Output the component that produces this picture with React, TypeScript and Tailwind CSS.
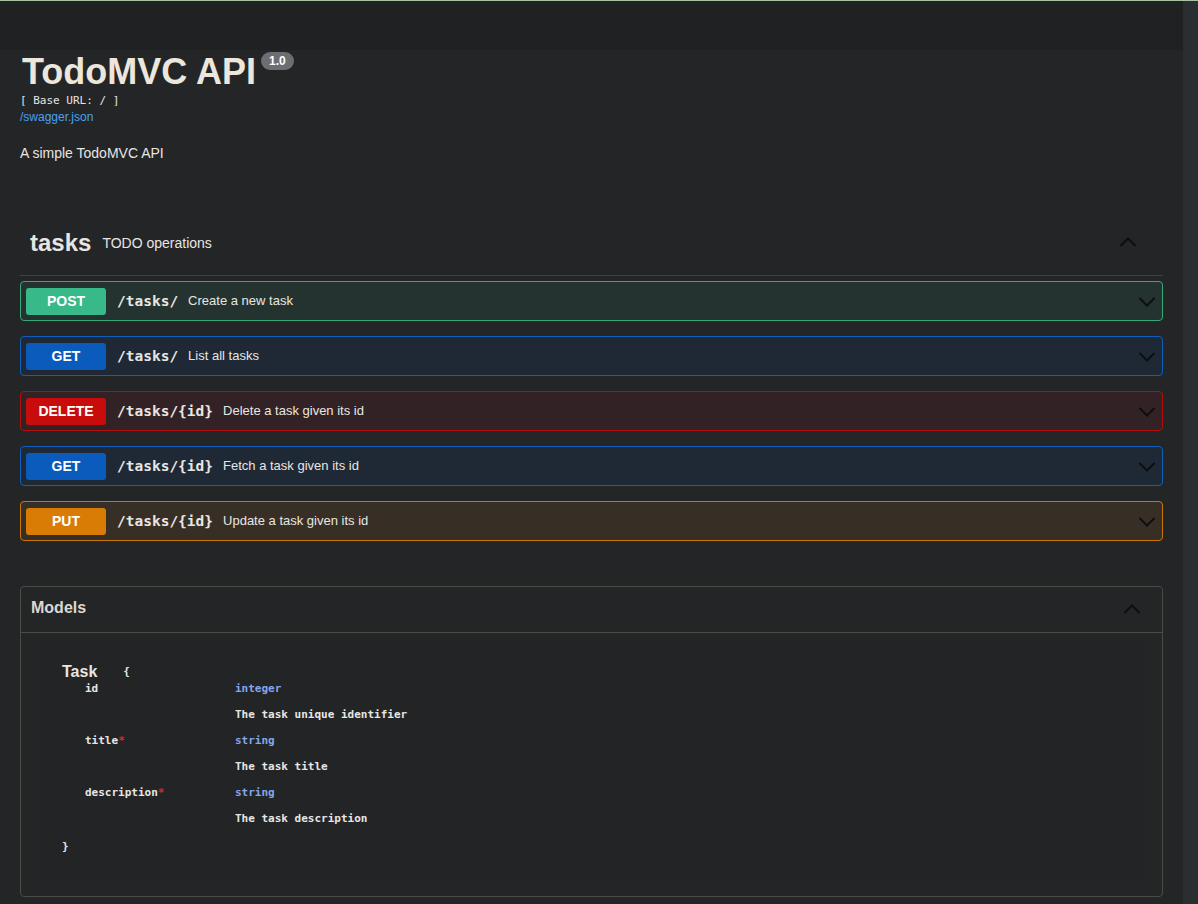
import React from "react";

interface Op {
  method: "POST" | "GET" | "DELETE" | "PUT";
  path: string;
  summary: string;
}

const ops: Op[] = [
  { method: "POST", path: "/tasks/", summary: "Create a new task" },
  { method: "GET", path: "/tasks/", summary: "List all tasks" },
  { method: "DELETE", path: "/tasks/{id}", summary: "Delete a task given its id" },
  { method: "GET", path: "/tasks/{id}", summary: "Fetch a task given its id" },
  { method: "PUT", path: "/tasks/{id}", summary: "Update a task given its id" },
];

const styles: Record<Op["method"], { row: string; badge: string }> = {
  POST: { row: "border-[#37a878] bg-[#253330]", badge: "bg-[#37b98a]" },
  GET: { row: "border-[#0d5fbf] bg-[#1f2935]", badge: "bg-[#0a5bbb]" },
  DELETE: { row: "border-[#b50c0c] bg-[#332225]", badge: "bg-[#c80b0b]" },
  PUT: { row: "border-[#c97808] bg-[#372f26]", badge: "bg-[#d97c06]" },
};

const props = [
  { name: "id", required: false, type: "integer", desc: "The task unique identifier" },
  { name: "title", required: true, type: "string", desc: "The task title" },
  { name: "description", required: true, type: "string", desc: "The task description" },
];

function Chevron({ up }: { up?: boolean }) {
  return (
    <svg width="20" height="20" viewBox="0 0 20 20" className="shrink-0">
      <path
        d={up ? "M2.5 14 L10 6.5 L17.5 14" : "M2.5 6 L10 13.5 L17.5 6"}
        fill="none"
        stroke="#0d0e0f"
        strokeWidth="2"
      />
    </svg>
  );
}

const mono = "font-['DejaVu_Sans_Mono',monospace]";

export default function App() {
  return (
    <div className="flex min-h-[904px] bg-[#242527] font-['Liberation_Sans',Arial,sans-serif] text-[#e8e6e3]">
      <div className="flex-1 min-w-0">
        <div className="h-[50px] border-t border-[#a8c3a2] bg-[#1f2123]" />

        <div className="px-5">
          {/* info */}
          <div className="flex items-start">
            <h1 className="text-[36px] font-bold leading-[43px] text-[#ece6dc] pl-[2px]">TodoMVC API</h1>
            <span className="ml-[5px] mt-[2px] rounded-full bg-[#6b6f74] px-[8px] py-[2px] text-[12px] font-bold leading-[14px] text-white">
              1.0
            </span>
          </div>
          <div className={`${mono} text-[11px] leading-[14px] mt-[1px]`}>[ Base URL: / ]</div>
          <a className="block text-[12px] leading-[16px] text-[#4aa0f0] mt-[1px]">/swagger.json</a>
          <p className="mt-[20px] text-[14px] leading-[16px]">A simple TodoMVC API</p>

          {/* tasks */}
          <div className="mt-[49px] flex h-[66px] items-center border-b border-[#3e4042] pl-[10px] pr-[25px]">
            <span className="text-[24px] font-bold">tasks</span>
            <span className="ml-[11px] mt-[2px] text-[14px]">TODO operations</span>
            <span className="ml-auto mt-[-2px]">
              <Chevron up />
            </span>
          </div>

          <div className="mt-[5px] flex flex-col gap-[15px]">
            {ops.map((op, i) => (
              <div
                key={i}
                className={`flex h-[40px] items-center rounded-[4px] border pl-[5px] pr-[5px] ${styles[op.method].row}`}
              >
                <span
                  className={`flex h-[27px] w-[80px] items-center justify-center rounded-[3px] text-[14px] font-bold text-white ${styles[op.method].badge}`}
                >
                  {op.method}
                </span>
                <span className={`${mono} ml-[11px] mt-[1px] text-[14.5px] font-bold`}>{op.path}</span>
                <span className="ml-[10px] text-[13px]">{op.summary}</span>
                <span className="ml-auto mt-[2px]">
                  <Chevron />
                </span>
              </div>
            ))}
          </div>

          {/* models */}
          <div className="mt-[45px] rounded-[4px] border border-[#4c4a45]">
            <div className="flex h-[46px] items-center border-b border-[#4c4a45] pl-[10px] pr-[20px]">
              <span className="mt-[-4px] text-[16px] font-bold text-[#ddd8cf]">Models</span>
              <span className="ml-auto mt-[-2px]">
                <Chevron up />
              </span>
            </div>
            <div className="px-[20px] pb-[18px] pt-[7px]">
              <div className="bg-[#222426] px-[21px] pb-[24px] pt-[22px]">
                <div className="flex items-start">
                  <span className="text-[16px] font-bold leading-[20px]">Task</span>
                  <span className={`${mono} ml-[26px] mt-[2px] text-[11px] font-bold`}>{"{"}</span>
                </div>
                <table className={`${mono} ml-[23px] text-[11px] font-bold leading-[14px]`}>
                  <tbody>
                    {props.map((p) => (
                      <React.Fragment key={p.name}>
                        <tr className="h-[26px] align-top">
                          <td className="w-[150px]">
                            {p.name}
                            {p.required && <span className="text-[#e02424]">*</span>}
                          </td>
                          <td className="text-[#86a4ec]">{p.type}</td>
                        </tr>
                        <tr className="h-[26px] align-top">
                          <td />
                          <td>{p.desc}</td>
                        </tr>
                      </React.Fragment>
                    ))}
                  </tbody>
                </table>
                <div className={`${mono} mt-[2px] text-[11px] font-bold leading-[14px]`}>{"}"}</div>
              </div>
            </div>
          </div>
          <div className="h-[7px]" />
        </div>
        <div className="h-[40px] bg-[#1f2123]" />
      </div>
      <div className="w-[15px] shrink-0 border-t border-[#a8c3a2] bg-[#2a2e30]" />
    </div>
  );
}
